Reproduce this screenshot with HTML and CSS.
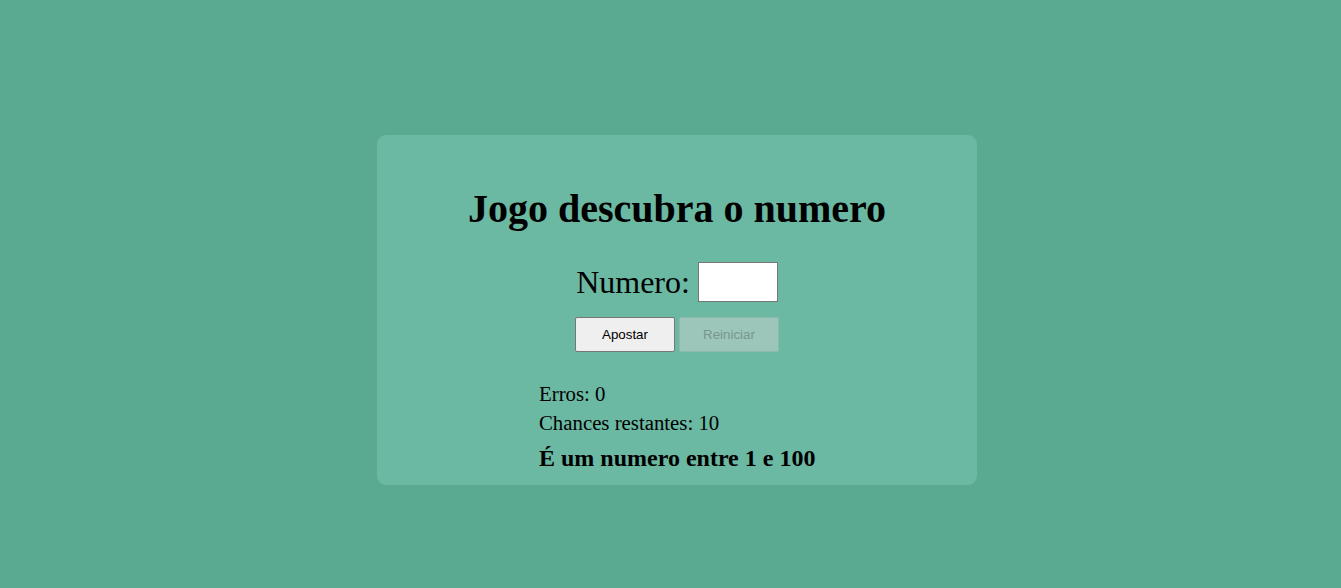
FILE: index.html
```html
<!DOCTYPE html>
<html lang="pt">
<head>
<meta charset="utf-8">
<title>Jogo descubra o numero</title>
<link rel="stylesheet" href="styles.css">
</head>
<body>
<main class="card">
  <h1 class="title">Jogo descubra o numero</h1>
  <div class="field">
    <label class="label" for="num">Numero:</label>
    <input class="input" id="num" type="text">
  </div>
  <div class="actions">
    <button class="btn btn-bet" type="button">Apostar</button>
    <button class="btn btn-reset" type="button" disabled>Reiniciar</button>
  </div>
  <div class="results">
    <p class="line">Erros: 0</p>
    <p class="line">Chances restantes: 10</p>
    <p class="hint">É um numero entre 1 e 100</p>
  </div>
</main>
</body>
</html>
```
FILE: styles.css
```css
html, body {
  margin: 0;
  padding: 0;
}
body {
  background: #5aaa91;
  font-family: "Liberation Serif", "Times New Roman", serif;
  color: #000;
  padding: 135px 0 0 13px;
}
.card {
  width: 600px;
  height: 350px;
  box-sizing: border-box;
  margin: 0 auto;
  background: #6bb8a3;
  border-radius: 9px;
  display: flex;
  flex-direction: column;
  align-items: center;
  padding-top: 50px;
}
.title {
  margin: 0;
  font-size: 40px;
  font-weight: bold;
  line-height: 48px;
}
.field {
  display: flex;
  align-items: center;
  gap: 8px;
  margin-top: 29px;
}
.label {
  font-size: 32px;
}
.input {
  width: 80px;
  height: 40px;
  box-sizing: border-box;
  border: 1px solid #767676;
  background: #fff;
  margin: 0;
}
.actions {
  display: flex;
  gap: 4px;
  margin-top: 15px;
}
.btn {
  width: 100px;
  height: 35px;
  box-sizing: border-box;
  font-family: "Liberation Sans", Arial, sans-serif;
  font-size: 13.33px;
  border: 1px solid #767676;
  border-radius: 2px;
  background: #efefef;
  color: #000;
  padding: 0;
}
.btn-reset {
  background: #9cc6ba;
  border-color: #8fb9ac;
  color: #78968d;
}
.results {
  align-self: flex-start;
  margin-left: 162px;
  margin-top: 27px;
}
.line {
  margin: 0;
  font-size: 20.8px;
  line-height: 29px;
}
.hint {
  margin: 6px 0 0;
  font-size: 24px;
  font-weight: bold;
  line-height: 30px;
}
```
